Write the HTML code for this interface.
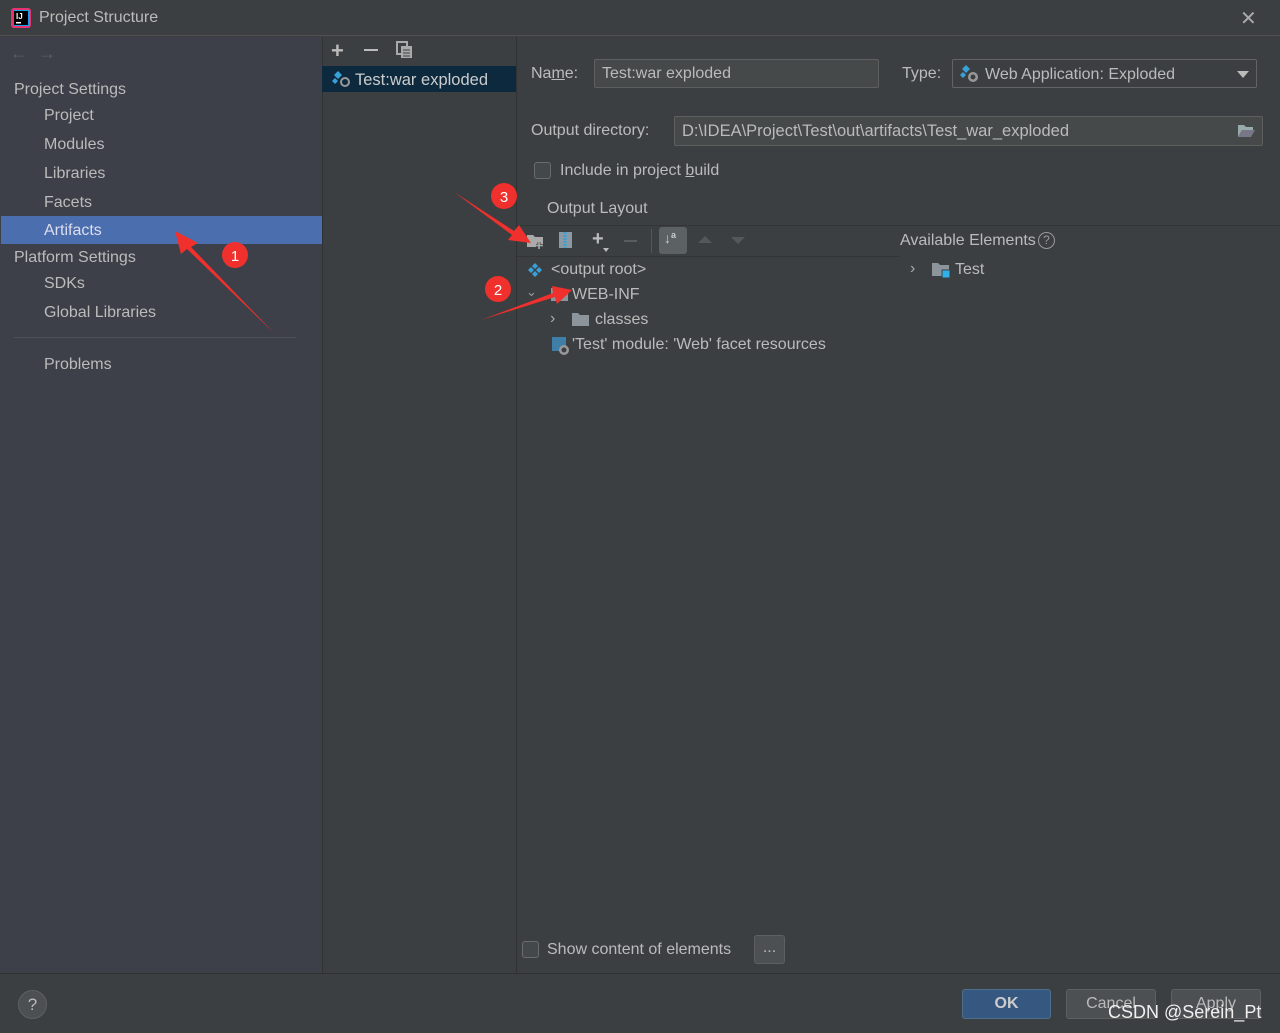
<!DOCTYPE html>
<html><head><meta charset="utf-8"><style>
*{margin:0;padding:0;box-sizing:border-box}
body{width:1280px;height:1033px;background:#3c3f41;font-family:"Liberation Sans",sans-serif;color:#bbbbbb;font-size:16px;position:relative;overflow:hidden}
.a{position:absolute;white-space:nowrap}
.box{position:absolute;border:1px solid #5e6060;background:#45494a;border-radius:2px}
.cb{position:absolute;width:17px;height:17px;border:1px solid #6b6b6b;background:#43494a;border-radius:3px}
.btn{position:absolute;height:30px;border:1px solid #5e6060;border-radius:3px;background:#4c5052;text-align:center;line-height:28px}
</style></head><body>
<div class="a" style="left:0;top:0;width:1280px;height:36px;background:#3c3f41;border-bottom:1px solid #515151"></div>
<svg class="a" style="left:10px;top:7px" width="22" height="22"><rect x="1" y="1" width="20" height="20" rx="3" fill="#e8336e"/><rect x="4" y="3" width="16" height="16" fill="#1aa0e8"/><rect x="4" y="4" width="14" height="14" fill="#000"/><text x="6" y="12" font-size="8" fill="#fff" font-family="Liberation Sans" font-weight="bold">IJ</text><rect x="6" y="15" width="5" height="1.5" fill="#fff"/></svg>
<div class="a" style="left:39px;top:9px;font-size:16px;color:#bbb">Project Structure</div>
<div class="a" style="left:1240px;top:6px;font-size:20px;color:#aaa">✕</div>

<div class="a" style="left:0;top:37px;width:322px;height:936px;background:#3d4049"></div>
<div class="a" style="left:10px;top:43px;font-size:18px;color:#5a5d63">←&nbsp;&nbsp;→</div>
<div class="a" style="left:14px;top:81px">Project Settings</div>
<div class="a" style="left:44px;top:107px">Project</div>
<div class="a" style="left:44px;top:136px">Modules</div>
<div class="a" style="left:44px;top:165px">Libraries</div>
<div class="a" style="left:44px;top:194px">Facets</div>
<div class="a" style="left:1px;top:216px;width:321px;height:28px;background:#4b6eaf"></div>
<div class="a" style="left:44px;top:222px;color:#dde">Artifacts</div>
<div class="a" style="left:14px;top:249px">Platform Settings</div>
<div class="a" style="left:44px;top:275px">SDKs</div>
<div class="a" style="left:44px;top:304px">Global Libraries</div>
<div class="a" style="left:14px;top:337px;width:282px;height:1px;background:#4e5157"></div>
<div class="a" style="left:44px;top:356px">Problems</div>

<div class="a" style="left:322px;top:37px;width:1px;height:936px;background:#2f3133"></div>
<div class="a" style="left:331px;top:38px;font-size:22px;color:#bbb;font-weight:bold">+</div>
<div class="a" style="left:364px;top:49px;width:14px;height:2px;background:#bbb"></div>
<svg class="a" style="left:396px;top:41px" width="18" height="18"><rect x="1" y="1" width="10" height="12" fill="none" stroke="#aaa" stroke-width="2"/><rect x="5" y="5" width="11" height="12" fill="#aaa"/><path d="M7 9h7M7 12h7M7 15h7" stroke="#3c3f41"/></svg>
<div class="a" style="left:322px;top:66px;width:195px;height:26px;background:#0d293e"></div>
<svg class="a" style="left:332px;top:70px" width="20" height="18"><path d="M6 1l4 4-4 4-4-4z" fill="#3aa0d8"/><path d="M3 8l3 3-3 3-3-3z" fill="#3aa0d8"/><circle cx="13" cy="12" r="5" fill="#999"/><circle cx="13" cy="12" r="3" fill="#0d293e"/></svg>
<div class="a" style="left:355px;top:71px;color:#ccc;font-size:16.5px">Test:war exploded</div>
<div class="a" style="left:516px;top:37px;width:1px;height:936px;background:#2f3133"></div>

<div class="a" style="left:531px;top:65px">Na<u>m</u>e:</div>
<div class="box" style="left:594px;top:59px;width:285px;height:29px"></div>
<div class="a" style="left:602px;top:65px">Test:war exploded</div>
<div class="a" style="left:902px;top:65px">Type:</div>
<div class="box" style="left:952px;top:59px;width:305px;height:29px;background:#3c3f41;border-color:#646464"></div>
<svg class="a" style="left:960px;top:64px" width="20" height="20"><path d="M6 1l4 4-4 4-4-4z" fill="#3aa0d8"/><path d="M3 8l3 3-3 3-3-3z" fill="#3aa0d8"/><circle cx="13" cy="13" r="5" fill="#999"/><circle cx="13" cy="13" r="2.5" fill="#3c3f41"/></svg>
<div class="a" style="left:985px;top:66px">Web Application: Exploded</div>
<div class="a" style="left:1237px;top:71px;width:0;height:0;border-left:6px solid transparent;border-right:6px solid transparent;border-top:7px solid #bbb"></div>
<div class="a" style="left:531px;top:122px">Output directory:</div>
<div class="box" style="left:674px;top:116px;width:589px;height:30px"></div>
<div class="a" style="left:682px;top:122px;font-size:16.5px">D:\IDEA\Project\Test\out\artifacts\Test_war_exploded</div>
<svg class="a" style="left:1237px;top:123px" width="18" height="15"><path d="M1 2h6l2 2h7v3H5L1 14z" fill="#9aa"/><path d="M5 7h13l-4 7H1z" fill="#778"/></svg>
<div class="cb" style="left:534px;top:162px"></div>
<div class="a" style="left:560px;top:162px">Include in project <u>b</u>uild</div>
<div class="a" style="left:547px;top:200px">Output Layout</div>
<div class="a" style="left:517px;top:225px;width:763px;height:1px;background:#323436"></div>
<svg class="a" style="left:526px;top:232px" width="20" height="18"><path d="M1 3h6l2 2h8v10H1z" fill="#aaa"/><path d="M13 10v7M10 13.5h7" stroke="#3c3f41" stroke-width="3"/><path d="M13 10v7M10 13.5h7" stroke="#aaa" stroke-width="1.6"/></svg>
<svg class="a" style="left:558px;top:231px" width="16" height="18"><rect x="1" y="1" width="13" height="16" fill="#8a9aa4"/><path d="M7 1v16" stroke="#3aa0d8" stroke-width="3" stroke-dasharray="2 1"/></svg>
<div class="a" style="left:592px;top:228px;font-size:20px;font-weight:bold;color:#bbb">+</div>
<div class="a" style="left:603px;top:248px;width:0;height:0;border-left:3px solid transparent;border-right:3px solid transparent;border-top:4px solid #bbb"></div>
<div class="a" style="left:624px;top:240px;width:13px;height:2px;background:#5a5d60"></div>
<div class="a" style="left:651px;top:229px;width:1px;height:24px;background:#555"></div>
<div class="a" style="left:659px;top:227px;width:28px;height:27px;background:#5c6164;border-radius:3px"></div>
<div class="a" style="left:664px;top:230px;font-size:14px;color:#ccc;font-weight:bold">↓<span style="font-size:9px;position:relative;top:-5px">a</span></div>
<div class="a" style="left:698px;top:236px;border-left:7px solid transparent;border-right:7px solid transparent;border-bottom:7px solid #55585b"></div>
<div class="a" style="left:731px;top:237px;border-left:7px solid transparent;border-right:7px solid transparent;border-top:7px solid #55585b"></div>
<div class="a" style="left:517px;top:256px;width:383px;height:1px;background:#323436"></div>
<div class="a" style="left:900px;top:232px">Available Elements</div>
<div class="a" style="left:1038px;top:232px;width:17px;height:17px;border:1.5px solid #999;border-radius:50%;font-size:12px;text-align:center;line-height:14px;color:#999">?</div>
<svg class="a" style="left:527px;top:262px" width="16" height="16"><path d="M8 1l3 3-3 3-3-3zM4 5l3 3-3 3-3-3zM12 5l3 3-3 3-3-3zM8 9l3 3-3 3-3-3z" fill="#3aa0d8"/></svg>
<div class="a" style="left:551px;top:261px">&lt;output root&gt;</div>
<div class="a" style="left:526px;top:284px;font-size:13px;color:#999">⌄</div>
<svg class="a" style="left:550px;top:287px" width="19" height="15"><path d="M1 1h6l2 2h9v11H1z" fill="#8c959b"/></svg>
<div class="a" style="left:572px;top:286px">WEB-INF</div>
<div class="a" style="left:550px;top:310px;color:#aaa">›</div>
<svg class="a" style="left:571px;top:312px" width="19" height="15"><path d="M1 1h6l2 2h9v11H1z" fill="#8c959b"/></svg>
<div class="a" style="left:595px;top:311px">classes</div>
<svg class="a" style="left:551px;top:336px" width="20" height="20"><rect x="1" y="1" width="14" height="14" fill="#3f7ea6"/><circle cx="13" cy="14" r="5" fill="#999"/><circle cx="13" cy="14" r="2.5" fill="#3c3f41"/></svg>
<div class="a" style="left:572px;top:336px">'Test' module: 'Web' facet resources</div>
<div class="a" style="left:910px;top:260px;color:#aaa">›</div>
<svg class="a" style="left:931px;top:262px" width="22" height="17"><path d="M1 1h6l2 2h9v11H1z" fill="#8c959b"/><rect x="11" y="8" width="8" height="8" fill="#2fb0e8" stroke="#3c3f41"/></svg>
<div class="a" style="left:955px;top:261px">Test</div>
<div class="cb" style="left:522px;top:941px"></div>
<div class="a" style="left:547px;top:941px">Show content of elements</div>
<div class="btn" style="left:754px;top:935px;width:31px;height:29px;line-height:24px">...</div>
<div class="a" style="left:0;top:973px;width:1280px;height:1px;background:#2f3133"></div>
<div class="a" style="left:0;top:974px;width:1280px;height:59px;background:#3c3f41"></div>
<div class="a" style="left:18px;top:990px;width:29px;height:29px;border-radius:50%;background:#4c5052;border:1px solid #5e6060;text-align:center;line-height:27px;font-size:17px;color:#bbb">?</div>
<div class="btn" style="left:962px;top:989px;width:89px;background:#365880;border-color:#4c708c;font-weight:bold;color:#ccc">OK</div>
<div class="btn" style="left:1066px;top:989px;width:90px">Cancel</div>
<div class="btn" style="left:1171px;top:989px;width:90px">Apply</div>
<div class="a" style="left:1108px;top:1002px;font-size:18px;color:#f0f0f0">CSDN @Serein_Pt</div>
<svg class="a" style="left:0;top:0" width="1280" height="1033">
<g fill="#f0302c">
<path d="M175 231 L198 243 L191 247 L274 333 L187 249 L181 254 Z"/>
<path d="M572 290 L552 286 L553 293 L481 320 L555 297 L557 304 Z"/>
<path d="M531 243 L519 225 L514 231 L454 192 L512 235 L508 240 Z"/>
<circle cx="235" cy="255" r="13"/><circle cx="498" cy="289" r="13"/><circle cx="504" cy="196" r="13"/>
</g>
<g fill="#fff" font-family="Liberation Sans" font-size="15" text-anchor="middle"><text x="235" y="261">1</text><text x="498" y="295">2</text><text x="504" y="202">3</text></g>
</svg>
</body></html>
